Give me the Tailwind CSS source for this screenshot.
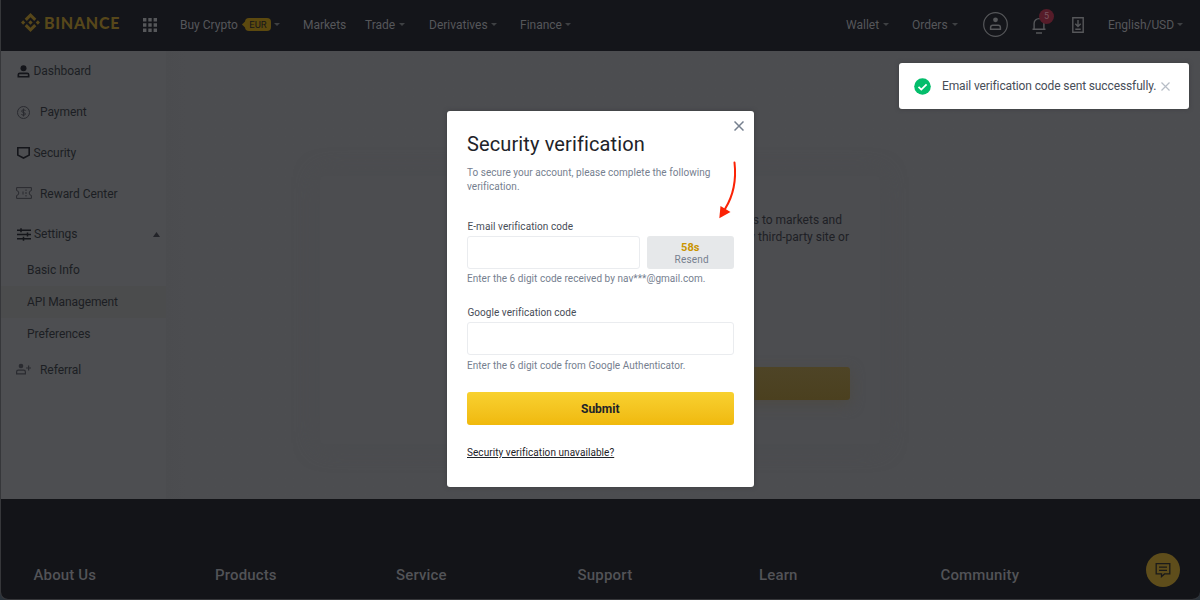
<!DOCTYPE html>
<html lang="en">
<head>
<meta charset="utf-8">
<title>Security verification</title>
<script src="https://cdn.jsdelivr.net/npm/@tailwindcss/browser@4"></script>
</head>
<body class="relative h-[600px] w-[1200px] overflow-hidden bg-[#2a333b] font-['Roboto',sans-serif]">
<div class="flex h-[600px] flex-col overflow-hidden rounded-b-lg border-b border-l border-[#36373a] bg-[#4c4d50]">

  <header class="flex h-[51px] shrink-0 items-center bg-[#14151a] pb-[2px] text-[12px] leading-[16px] whitespace-nowrap text-[#56575a]">
    <svg class="mt-[-4px] ml-[20px] h-[19px] w-[19px] fill-[#57471a]" viewBox="0 0 126.6 126.6"><path d="M38.7 53.2 63.3 28.6 87.9 53.2 102.2 38.9 63.3 0 24.4 38.9zM0 63.3 14.3 49 28.6 63.3 14.3 77.6zM38.7 73.4 63.3 98 87.9 73.4 102.2 87.7 63.3 126.6 24.4 87.7zM98 63.3 112.3 49 126.6 63.3 112.3 77.6zM77.8 63.3 63.3 48.8 48.8 63.3 63.3 77.8z"/></svg>
    <span class="mt-[-4px] ml-[4px] w-[77px] font-['Lato',sans-serif] text-[16px] font-black tracking-[0.7px] text-[#57471a]">BINANCE</span>
    <svg class="ml-[22px] h-[14px] w-[14px] fill-[#56575a]" viewBox="0 0 14 14"><path d="M0 0h3.4v3.4H0zM5.3 0h3.4v3.4H5.3zM10.6 0H14v3.4h-3.4zM0 5.3h3.4v3.4H0zM5.3 5.3h3.4v3.4H5.3zM10.6 5.3H14v3.4h-3.4zM0 10.6h3.4V14H0zM5.3 10.6h3.4V14H5.3zM10.6 10.6H14V14h-3.4z"/></svg>
    <span class="ml-[23px] w-[63px]">Buy Crypto</span>
    <span class="relative ml-[2px] flex h-[13px] w-[26px] items-center justify-center rounded-[4px] bg-[#5c490f] text-[9.5px] text-[#14151a]">EUR<span class="absolute top-[4px] left-[-2px] h-[5px] w-[5px] rotate-45 bg-[#5c490f]"></span></span>
    <svg class="ml-[3px] h-[3px] w-[6px] fill-[#3e4043]" viewBox="0 0 6 3"><path d="M0 0h6L3 3z"/></svg>
    <span class="ml-[23px] w-[42px] tracking-[-0.05px]">Markets</span>
    <span class="ml-[20px] w-[30px]">Trade</span>
    <svg class="ml-[4px] h-[3px] w-[6px] fill-[#3e4043]" viewBox="0 0 6 3"><path d="M0 0h6L3 3z"/></svg>
    <span class="ml-[24px] w-[58px]">Derivatives</span>
    <svg class="ml-[4px] h-[3px] w-[6px] fill-[#3e4043]" viewBox="0 0 6 3"><path d="M0 0h6L3 3z"/></svg>
    <span class="ml-[23px] w-[41px]">Finance</span>
    <svg class="ml-[4px] h-[3px] w-[6px] fill-[#3e4043]" viewBox="0 0 6 3"><path d="M0 0h6L3 3z"/></svg>
    <div class="ml-auto flex items-center pr-[17px]">
      <span class="w-[34px]">Wallet</span>
      <svg class="ml-[3px] h-[3px] w-[6px] fill-[#3e4043]" viewBox="0 0 6 3"><path d="M0 0h6L3 3z"/></svg>
      <span class="ml-[23px] w-[36px]">Orders</span>
      <svg class="ml-[4px] h-[3px] w-[6px] fill-[#3e4043]" viewBox="0 0 6 3"><path d="M0 0h6L3 3z"/></svg>
      <svg class="ml-[25px] h-[25px] w-[25px] fill-none stroke-[#56575a]" viewBox="0 0 25 25"><circle cx="12.5" cy="12.5" r="11.8" stroke-width="1.2"/><circle cx="12.5" cy="7.8" r="2.4" fill="#56575a" stroke="none"/><path d="M7.6 17.2v-1.8q0-2.2 2.2-2.2h5.4q2.2 0 2.2 2.2v1.8z" stroke-width="1.5"/></svg>
      <div class="relative ml-[24px] h-[18px] w-[14px]">
        <svg class="h-[18px] w-[14px] fill-none stroke-[#56575a]" viewBox="0 0 14 18"><path d="M.5 13.3h13M2.1 13V7.5a4.9 4.9 0 0 1 9.8 0V13M4 17h6" stroke-width="1.4"/></svg>
        <span class="absolute -top-[7px] left-[7px] flex h-[15px] w-[15px] items-center justify-center rounded-full bg-[#561c29] text-[9px] text-[#7a5660]">5</span>
      </div>
      <svg class="ml-[26px] h-[16px] w-[12px] fill-none stroke-[#56575a]" viewBox="0 0 12 16"><path d="M.8.8h10.4v14.4H.8zM6 3v6.5M3.3 6.800 6 9.500l2.700-2.700M3.300 12.200h5.400" stroke-width="1.400"/></svg>
      <span class="ml-[24px] w-[66px] tracking-[-0.05px]">English/USD</span>
      <svg class="ml-[3px] h-[3px] w-[6px] fill-[#3e4043]" viewBox="0 0 6 3"><path d="M0 0h6L3 3z"/></svg>
    </div>
  </header>

  <div class="flex h-[448px] shrink-0">
    <nav class="flex w-[165px] flex-col bg-[#4d4e51] text-[12px] leading-[16px] tracking-[-0.05px] whitespace-nowrap text-[#1c1e23]">
      <a class="mt-[12px] flex h-[16px] items-center pl-[16px]"><svg class="mr-[3.5px] h-[13px] w-[13px] fill-[#14151a]" viewBox="0 0 13 13"><circle cx="6.5" cy="3.2" r="3"/><path d="M.5 12.6V9.8q0-2.4 2.4-2.4h7.2q2.4 0 2.4 2.4v2.8zM2.2 11h8.6V9.2H2.2z" fill-rule="evenodd"/></svg>Dashboard</a>
      <a class="mt-[25px] flex h-[16px] items-center pl-[16px]"><svg class="mr-[10px] h-[13px] w-[13px] fill-none stroke-[#2a2b30]" viewBox="0 0 13 13"><circle cx="6.5" cy="6.5" r="6"/><path d="M8.5 4.9q-.4-1.1-2-1.1T4.6 5.1q0 1 1.9 1.4t1.9 1.5q0 1.2-1.9 1.2t-2.1-1.2M6.5 2.6v7.8"/></svg>Payment</a>
      <a class="mt-[25px] flex h-[16px] items-center pl-[16px]"><svg class="mr-[3.5px] h-[12px] w-[13px] fill-none stroke-[#14151a]" viewBox="0 0 13 12"><path d="M.8.8h11.4v7.3L6.5 11 .8 8.1z" stroke-width="1.6"/></svg>Security</a>
      <a class="mt-[25px] flex h-[16px] items-center pl-[15px]"><svg class="mr-[8px] mb-[2px] h-[12px] w-[16px] fill-none stroke-[#2a2b30]" viewBox="0 0 16 12"><path d="M.6.6h14.8v2.9q-2.2.4-2.2 2.5t2.2 2.5v2.9H.6V8.5q2.2-.4 2.2-2.5T.6 3.5zM10 2.5v1.5M10 8v1.5M7 4.5v3M9 6h2"/></svg>Reward Center</a>
      <a class="mt-[24px] flex h-[16px] items-center pl-[16px]"><svg class="mr-[3px] h-[13px] w-[14px] fill-none stroke-[#14151a]" viewBox="0 0 14 13"><path d="M0 2.3h14M0 6.5h14M0 10.7h14M4 .3v4M10.5 4.5v4M6.5 8.7v4" stroke-width="1.5"/></svg>Settings<svg class="mr-[6px] ml-auto h-[5px] w-[7px] fill-[#232429]" viewBox="0 0 7 5"><path d="M0 5h7L3.5 0z"/></svg></a>
      <a class="mt-[12px] flex h-[32px] items-center pl-[26px]">Basic Info</a>
      <a class="flex h-[32px] items-center bg-[#4b4c4d] pl-[26px] tracking-[-0.1px]">API Management</a>
      <a class="flex h-[31px] items-center pl-[26px]">Preferences</a>
      <a class="mt-[13px] flex h-[16px] items-center pl-[15px]"><svg class="mr-[9px] mb-[2px] h-[12px] w-[15px] fill-[#2a2b30]" viewBox="0 0 15 12"><circle cx="5" cy="3" r="2.3"/><path d="M0 11.5V9q0-2.4 2.4-2.4h5.2Q10 6.6 10 9v2.5zM1.2 10.3h7.6V9q0-1.2-1.2-1.2H2.4Q1.2 7.8 1.2 9zM12 2.5h1.2v1.9H15v1.2h-1.8v1.9H12V5.6h-1.9V4.4H12z" fill-rule="evenodd"/></svg>Referral</a>
    </nav>
    <main class="flex-1 bg-linear-to-r from-[#4b4c4f] to-[#4c4d50] to-2%">
      <section class="mt-[125px] ml-[154px] flex h-[268px] w-[560px] flex-col items-end rounded bg-[#4c4d50] pt-[36px] text-[12px] leading-[17px] text-[#1e2025] shadow-[0_0_24px_#4b4c4f]">
        <p class="pr-[38px]">access to markets and</p>
        <p class="pr-[31px]">any third-party site or</p>
        <div class="mt-[121px] mr-[30px] h-[33px] w-[266px] rounded-[3px] bg-linear-to-b from-[#4e4426] to-[#4b401f] shadow-[0_4px_14px_#4d4a43]"></div>
      </section>
    </main>
  </div>

  <footer class="flex flex-1 items-start bg-[#131418] pt-[66px] pl-[32.5px] text-[15px] leading-[20px] font-medium whitespace-nowrap text-[#525357]">
    <span class="w-[181.5px] tracking-[0.15px]">About Us</span>
    <span class="w-[181px] tracking-[0.15px]">Products</span>
    <span class="w-[181.5px] tracking-[0.15px]">Service</span>
    <span class="w-[181.5px] tracking-[0.2px]">Support</span>
    <span class="w-[181.5px] tracking-[0.15px]">Learn</span>
    <span class="tracking-[0.15px]">Community</span>
  </footer>
</div>

<button class="absolute top-[553px] left-[1146px] flex h-[34px] w-[34px] items-center justify-center rounded-full bg-[#5e4d1b]">
  <svg class="h-[16px] w-[16px] fill-none stroke-[#1a1a1a]" viewBox="0 0 16 16"><path d="M1.2 1.7h13.6v10.2H9.5l-3 2.7v-2.700H1.200zM4 5.200h8M4 8.400h8" stroke-width="1.300"/></svg>
</button>

<div role="dialog" class="absolute top-[111px] left-[447px] flex h-[376px] w-[306.5px] flex-col rounded-[3px] bg-white px-[20px] pt-[19px] text-[10px] leading-[14px] whitespace-nowrap text-[#474d57] shadow-[0_0_4px_#3c3d40]">
  <h1 class="text-[20px] leading-[28px] tracking-[0.12px] text-[#1e2329]">Security verification</h1>
  <p class="mt-[8px] leading-[13.5px] tracking-[0.04px] text-[#76808f]">To secure your account, please complete the following<br>verification.</p>
  <label class="mt-[27px] pl-[0.5px] tracking-[0.08px]">E-mail verification code</label>
  <div class="mt-[2px] flex gap-[7px]">
    <div class="h-[33px] w-[173px] rounded-[3px] border border-[#eaecef]"></div>
    <div class="flex h-[33px] w-[86.5px] flex-col items-center rounded-[3px] bg-[#e6e8ea] pt-[5px] text-[#76808f]">
      <b class="text-[11px] leading-[13px] text-[#c99400]">58s</b>
      <span class="pl-[3px] leading-[12px] tracking-[0.2px]">Resend</span>
    </div>
  </div>
  <p class="mt-[3px] tracking-[0.04px] text-[#76808f]">Enter the 6 digit code received by nav***@gmail.com.</p>
  <label class="mt-[20px] pl-[0.5px] tracking-[0.04px]">Google verification code</label>
  <div class="mt-[2px] h-[33px] rounded-[3px] border border-[#eaecef]"></div>
  <p class="mt-[4px] tracking-[0.04px] text-[#76808f]">Enter the 6 digit code from Google Authenticator.</p>
  <button class="mt-[19px] h-[33px] shrink-0 rounded-[3px] bg-linear-to-b from-[#f8d12f] to-[#f0b90b] text-[12px] font-bold text-[#1e2329]">Submit</button>
  <a class="mt-[21px] tracking-[0.06px] text-[#1e2329] underline">Security verification unavailable?</a>
  <svg class="absolute top-[10px] right-[10px] h-[10px] w-[10px] stroke-[#76808f]" viewBox="0 0 10 10"><path d="M.5.5l9 9M9.5.5l-9 9" stroke-width="1.5"/></svg>
  <svg class="absolute top-[50px] left-[270px] h-[58px] w-[24px]" viewBox="0 0 24 58"><path d="M17.500 1.500Q20.500 28 8 48" fill="none" stroke="#fb2306" stroke-width="2" stroke-linecap="round"/><path d="M2.300 57.300 3.500 45 13.500 51z" fill="#fb2306"/></svg>
</div>

<div role="status" class="absolute top-[63px] left-[899px] flex h-[46px] w-[289.5px] items-center rounded-[3px] bg-white pl-[15px] text-[12px] tracking-[-0.12px] whitespace-nowrap text-[#474d57] shadow-[0_0_4px_#3c3d40]">
  <svg class="h-[17px] w-[17px]" viewBox="0 0 17 17"><circle cx="8.5" cy="8.5" r="8.3" fill="#03bd6b"/><path d="M4.5 8.8l2.8 2.8 5.3-5.3" fill="none" stroke="#fff" stroke-width="1.8"/></svg>
  <span class="ml-[11px] w-[214px]">Email verification code sent successfully.</span>
  <svg class="ml-[5px] h-[9px] w-[9px] stroke-[#b7bdc6]" viewBox="0 0 9 9"><path d="M.5.5l8 8M8.5.5l-8 8" stroke-width="1.2"/></svg>
</div>
</body>
</html>
